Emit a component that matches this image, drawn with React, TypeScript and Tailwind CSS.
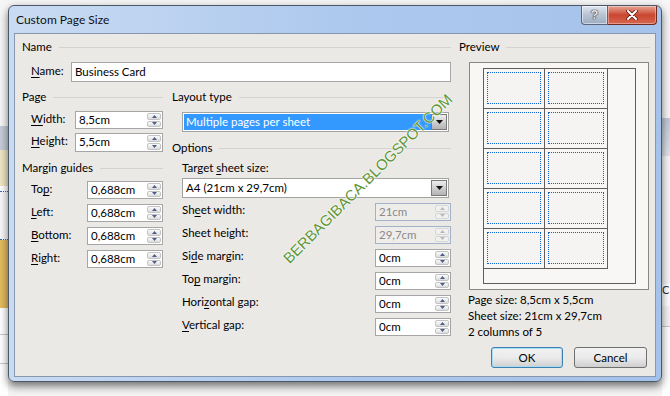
import React from 'react';

const font = "font-['Lato','Noto_Sans',sans-serif]";

function Key({ children }: { children: React.ReactNode }) {
  return <span className="underline underline-offset-[2px]">{children}</span>;
}

function GroupHeader({ title, className = '' }: { title: string; className?: string }) {
  return (
    <div className={`flex items-center gap-[7px] h-[16px] ${className}`}>
      <span className="leading-[16px]">{title}</span>
      <div className="flex-1 h-px bg-[#d3d3d3]" />
    </div>
  );
}

function Arrow({ up, disabled }: { up?: boolean; disabled?: boolean }) {
  return (
    <div
      className={`flex-1 flex items-center justify-center rounded-[2px] border ${
        disabled ? 'border-[#d6d6d6] bg-[#f1f1f1]' : 'border-[#c3c3c3] bg-linear-to-b from-[#fbfbfb] to-[#dcdcdc]'
      }`}
    >
      <svg width="5" height="3" viewBox="0 0 5 3">
        <path d={up ? 'M0 3L2.5 0L5 3Z' : 'M0 0H5L2.5 3Z'} fill={disabled ? '#b8b8b8' : '#4d5d86'} />
      </svg>
    </div>
  );
}

function SpinBox({ value, className = '', disabled }: { value: string; className?: string; disabled?: boolean }) {
  return (
    <div
      className={`flex h-[18px] border ${
        disabled ? 'border-[#a3b1c9] bg-[#efedea] text-[#8a8a8a]' : 'border-[#a6a6a6] bg-white'
      } ${className}`}
    >
      <span className="flex-1 pl-[3px] leading-[16px]">{value}</span>
      <div className="w-[16px] flex flex-col gap-px p-px">
        <Arrow up disabled={disabled} />
        <Arrow disabled={disabled} />
      </div>
    </div>
  );
}

function Combo({ text, selected, className = '' }: { text: string; selected?: boolean; className?: string }) {
  return (
    <div className={`flex h-[20px] border border-[#a3a3a3] bg-white p-px ${className}`}>
      <span className={`flex-1 pl-[2px] leading-[16px] ${selected ? 'bg-[#3399ff] text-white' : ''}`}>{text}</span>
      <div className="w-[16px] flex items-center justify-center border border-[#7a7a7a] bg-linear-to-b from-[#ededed] to-[#b3b3b3]">
        <svg width="7" height="4" viewBox="0 0 7 4">
          <path d="M0 0H7L3.5 4Z" fill="#111" />
        </svg>
      </div>
    </div>
  );
}

function LeftRow({ label, value, inputClass, className = '' }: { label: React.ReactNode; value: string; inputClass: string; className?: string }) {
  return (
    <div className={`flex items-start justify-between pl-[9px] ${className}`}>
      <span className="leading-[16px]">{label}</span>
      <SpinBox value={value} className={inputClass} />
    </div>
  );
}

function OptRow({ label, value, disabled }: { label: React.ReactNode; value: string; disabled?: boolean }) {
  return (
    <div className="flex items-start justify-between pl-[10px] mt-[5px]">
      <span className="leading-[16px] -mt-px">{label}</span>
      <SpinBox value={value} className="w-[76px]" disabled={disabled} />
    </div>
  );
}

function Card() {
  return (
    <div className="border-r border-b border-[#615c58] p-[3px] pb-[4px]">
      <div className="h-full border border-dotted border-[#0b5fcf] bg-[#f5f4f2]" />
    </div>
  );
}

export default function App() {
  const cards = Array.from({ length: 10 });
  return (
    <div className={`${font} text-[11.5px] text-black w-[670px] h-[396px] flex bg-[#f4f4f4] overflow-hidden`}>
      {/* background strip left */}
      <div className="w-[8px] flex flex-col">
        <div className="h-[126px] bg-[#f6f6f6]" />
        <div className="h-[24px] bg-[#c6cdd8]" />
        <div className="h-[36px] bg-[#efe6c4]" />
        <div className="h-[6px] bg-white border-b border-dotted border-[#3060c0]" />
        <div className="h-[48px] bg-[#f8f8f8] border-b border-dotted border-[#3060c0]" />
        <div className="h-[68px] bg-[#e2bb5c]" />
        <div className="flex-1 bg-white flex flex-col gap-[28px] pt-[26px]">
          <div className="h-px bg-[#c8c8c8]" />
          <div className="h-px bg-[#c8c8c8]" />
        </div>
      </div>

      <div className="w-[654px] pt-[5px] flex flex-col">
        {/* window */}
        <div className="relative h-[377px] rounded-[6px] border border-[#4c5867] bg-linear-to-r from-[#c9dbf2] via-[#aec9ee] to-[#a5c2ea] shadow-[0_4px_8px_rgba(0,0,0,0.55)] flex flex-col">
          {/* title bar */}
          <div className="h-[27px] flex items-start pl-[7px] pr-[4px]">
            <span className="mt-[6px] leading-[16px] text-[12px] text-[#111]">Custom Page Size</span>
            <div className="flex-1" />
            <div className="flex h-[19px]">
              <div className="w-[27px] flex items-center justify-center rounded-bl-[4px] border border-t-0 border-[#58657a] bg-linear-to-b from-[#dfe6ef] via-[#b7c3d4] to-[#9dadc3] shadow-[inset_0_0_0_1px_rgba(255,255,255,0.5)]">
                <span className="font-['Liberation_Sans',sans-serif] font-bold text-[13px] text-[#e8e8e8] [text-shadow:0_0_1px_#333,0_0_1px_#333,0_0_1px_#333]">?</span>
              </div>
              <div className="w-[49px] flex items-center justify-center rounded-br-[4px] border border-t-0 border-l-0 border-[#6e2a20] bg-linear-to-b from-[#e6a595] via-[#c9452f] to-[#d8664f] shadow-[inset_0_0_0_1px_rgba(255,255,255,0.35)]">
                <svg width="12" height="10" viewBox="0 0 12 10">
                  <path d="M2 1L10 9M10 1L2 9" stroke="#5a1c12" strokeWidth="3.6" strokeLinecap="round" />
                  <path d="M2 1L10 9M10 1L2 9" stroke="#fff" strokeWidth="2" strokeLinecap="round" />
                </svg>
              </div>
            </div>
          </div>

          {/* client area */}
          <div className="flex-1 mx-[5px] mb-[4px] border border-[#8797ad] bg-[#ebe9e6] flex pl-[7px] pt-[5px]">
            <div className="w-[429px] flex flex-col">
              <GroupHeader title="Name" />
              <div className="flex items-center justify-between pl-[9px] mt-[7px]">
                <span className="leading-[16px] -mt-[2px]">
                  <Key>N</Key>ame:
                </span>
                <div className="w-[380px] h-[20px] border border-[#a6a6a6] bg-white pl-[3px] leading-[18px]">Business Card</div>
              </div>

              <div className="flex gap-[9px] mt-[7px]">
                <div className="w-[141px] flex flex-col">
                  <GroupHeader title="Page" />
                  <LeftRow className="mt-[6px]" label={<><Key>W</Key>idth:</>} value="8,5cm" inputClass="w-[88px]" />
                  <LeftRow className="mt-[4px]" label={<><Key>H</Key>eight:</>} value="5,5cm" inputClass="w-[88px] h-[19px]" />
                  <GroupHeader title="Margin guides" className="mt-[8px]" />
                  <LeftRow className="mt-[5px]" label={<>To<Key>p</Key>:</>} value="0,688cm" inputClass="w-[76px]" />
                  <LeftRow className="mt-[5px]" label={<><Key>L</Key>eft:</>} value="0,688cm" inputClass="w-[76px]" />
                  <LeftRow className="mt-[5px]" label={<><Key>B</Key>ottom:</>} value="0,688cm" inputClass="w-[76px]" />
                  <LeftRow className="mt-[5px]" label={<><Key>R</Key>ight:</>} value="0,688cm" inputClass="w-[76px]" />
                </div>

                <div className="flex-1 flex flex-col">
                  <GroupHeader title="Layout type" />
                  <Combo text="Multiple pages per sheet" selected className="ml-[10px] mt-[7px] mr-[2px]" />
                  <GroupHeader title="Options" className="mt-[8px]" />
                  <span className="pl-[10px] mt-[4px] leading-[16px]">
                    Target <Key>s</Key>heet size:
                  </span>
                  <Combo text="A4 (21cm x 29,7cm)" className="ml-[10px] mt-[2px] mr-[2px]" />
                  <OptRow label={<>Sh<Key>e</Key>et width:</>} value="21cm" disabled />
                  <OptRow label="Sheet height:" value="29,7cm" disabled />
                  <OptRow label={<>Si<Key>d</Key>e margin:</>} value="0cm" />
                  <OptRow label={<>To<Key>p</Key> margin:</>} value="0cm" />
                  <OptRow label={<>Hori<Key>z</Key>ontal gap:</>} value="0cm" />
                  <OptRow label={<><Key>V</Key>ertical gap:</>} value="0cm" />
                </div>
              </div>
            </div>

            <div className="w-[191px] ml-[8px] flex flex-col">
              <GroupHeader title="Preview" />
              <div className="ml-[10px] mt-[7px] w-[180px] h-[228px] border border-[#8a8886] bg-[#f8f7f5] pl-[13px] pt-[5px]">
                <div className="w-[153px] h-[216px] border border-[#615c58]">
                  <div className="grid grid-cols-[61px_63px] auto-rows-[40px]">
                    {cards.map((_, i) => (
                      <Card key={i} />
                    ))}
                  </div>
                </div>
              </div>
              <div className="ml-[9px] mt-[2px] flex flex-col leading-[16px]">
                <span>Page size: 8,5cm x 5,5cm</span>
                <span>Sheet size: 21cm x 29,7cm</span>
                <span>2 columns of 5</span>
              </div>
              <div className="flex justify-end gap-[11px] mt-[7px] mr-[3px]">
                <button className="w-[72px] h-[21px] rounded-[3px] border border-[#3c7fb1] bg-linear-to-b from-[#f2f2f2] via-[#ebebeb] to-[#cfcfcf] shadow-[inset_0_0_0_1px_#a8dcf4]">
                  OK
                </button>
                <button className="w-[73px] h-[21px] rounded-[3px] border border-[#707070] bg-linear-to-b from-[#f2f2f2] via-[#ebebeb] to-[#cfcfcf]">
                  Cancel
                </button>
              </div>
            </div>
          </div>

          {/* blog watermark */}
          <span className="absolute left-[359px] top-[173px] -translate-x-1/2 -translate-y-1/2 -rotate-45 whitespace-nowrap font-['Liberation_Sans',sans-serif] text-[15px] text-[#5e9636] [text-shadow:0_0_2px_#fff,0_0_1px_#fff,0_0_1px_#fff]">
            BERBAGIBACA.BLOGSPOT.COM
          </span>
        </div>
      </div>

      {/* background strip right */}
      <div className="w-[8px] flex flex-col">
        <div className="h-[118px] bg-[#f6f6f6]" />
        <div className="h-[38px] bg-linear-to-b from-[#bfc9d6] to-[#dfe3e9]" />
        <div className="h-[128px] bg-[#f6f6f6]" />
        <div className="h-[22px] bg-white text-[11px] leading-[11px] text-[#333] overflow-hidden">
          <span>C</span>
        </div>
        <div className="h-px bg-[#c8c8c8] mt-[20px]" />
        <div className="flex-1 bg-white" />
      </div>
    </div>
  );
}
